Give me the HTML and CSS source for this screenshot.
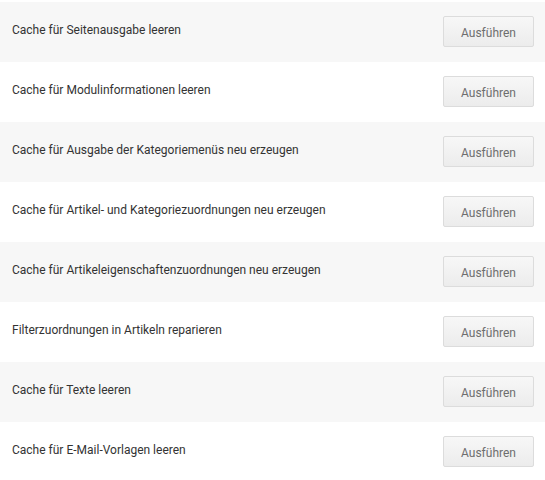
FILE: index.html
```html
<!DOCTYPE html>
<html>
<head>
<meta charset="utf-8">
<link rel="stylesheet" href="styles.css">
</head>
<body>
<div class="list">
  <div class="row"><span class="label">Cache für Seitenausgabe leeren</span><button class="btn">Ausführen</button></div>
  <div class="row"><span class="label">Cache für Modulinformationen leeren</span><button class="btn">Ausführen</button></div>
  <div class="row"><span class="label">Cache für Ausgabe der Kategoriemenüs neu erzeugen</span><button class="btn">Ausführen</button></div>
  <div class="row"><span class="label">Cache für Artikel- und Kategoriezuordnungen neu erzeugen</span><button class="btn">Ausführen</button></div>
  <div class="row"><span class="label">Cache für Artikeleigenschaftenzuordnungen neu erzeugen</span><button class="btn">Ausführen</button></div>
  <div class="row"><span class="label">Filterzuordnungen in Artikeln reparieren</span><button class="btn">Ausführen</button></div>
  <div class="row"><span class="label">Cache für Texte leeren</span><button class="btn">Ausführen</button></div>
  <div class="row"><span class="label">Cache für E-Mail-Vorlagen leeren</span><button class="btn">Ausführen</button></div>
</div>
</body>
</html>
```
FILE: styles.css
```css
html, body {
  margin: 0;
  padding: 0;
  background: #fff;
}
body {
  font-family: Roboto, "Liberation Sans", sans-serif;
  padding-top: 2px;
}
.list {
  display: flex;
  flex-direction: column;
}
.row {
  height: 60px;
  display: flex;
  align-items: center;
  justify-content: space-between;
  padding: 0 11px 0 12px;
  box-sizing: border-box;
}
.row:nth-child(odd) {
  background: #f7f7f7;
}
.label {
  font-size: 12px;
  color: #333;
  margin-top: -4px;
}
.btn {
  width: 91px;
  height: 31px;
  margin-top: -1px;
  border: 1px solid #dcdcdc;
  border-radius: 2px;
  background: linear-gradient(#f7f7f7, #ececec);
  color: #6e6e6e;
  font-family: Roboto, "Liberation Sans", sans-serif;
  font-size: 12px;
  padding: 3px 0 0;
}
```
